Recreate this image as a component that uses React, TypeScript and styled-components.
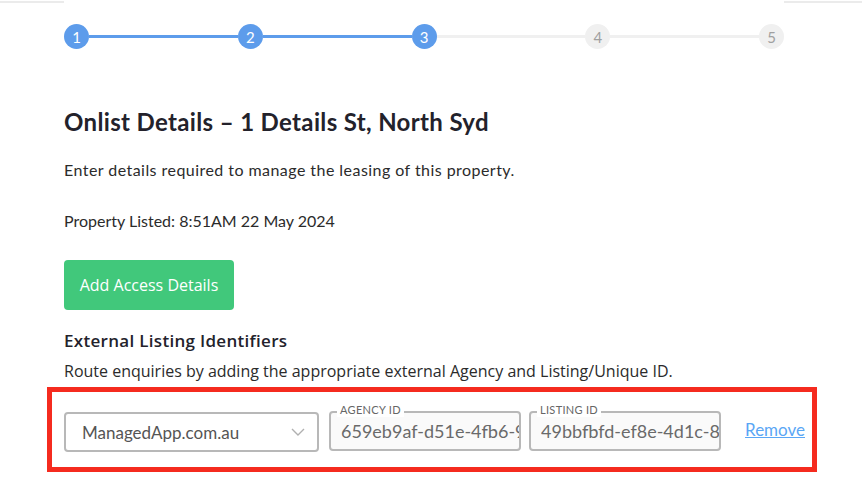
import React from "react";
import styled, { createGlobalStyle } from "styled-components";

const Global = createGlobalStyle`
  html, body { margin: 0; padding: 0; background: #fff; overflow: hidden; }
  body { width: 862px; height: 483px; }
`;

const TopRule = styled.div`
  display: grid;
  grid-template-columns: 64px 720px 1fr;
  height: 3px;
  align-items: end;
`;

const RuleSeg = styled.div<{ $show?: boolean }>`
  height: 2px;
  background: ${(p) => (p.$show ? "#ebebeb" : "transparent")};
`;

const Main = styled.main`
  width: 720px;
  margin-left: 64px;
  display: flex;
  flex-direction: column;
`;

const Stepper = styled.div`
  display: flex;
  align-items: center;
  margin-top: 21px;
`;

const StepDot = styled.div<{ $done: boolean }>`
  width: 25px;
  height: 25px;
  border-radius: 50%;
  flex: none;
  display: flex;
  align-items: center;
  justify-content: center;
  background: ${(p) => (p.$done ? "#5d9ceb" : "#f0f0f0")};
  color: ${(p) => (p.$done ? "#ffffff" : "#a0a0a0")};
  font-family: "Lato", "DejaVu Sans", sans-serif;
  font-size: 15px;
  font-weight: 400;
`;

const StepLine = styled.div<{ $done: boolean }>`
  flex: 1;
  height: 3px;
  background: ${(p) => (p.$done ? "#5d9ceb" : "#f0f0f0")};
`;

const Title = styled.h1`
  margin: 58px 0 0;
  font-family: "Lato", sans-serif;
  font-weight: 700;
  font-size: 24px;
  line-height: 30px;
  color: #23222b;
  letter-spacing: 0.35px;
`;

const Para = styled.p<{ $mt: number; $ls: number }>`
  margin: ${(p) => p.$mt}px 0 0;
  font-family: "Lato", sans-serif;
  font-size: 16px;
  line-height: 22px;
  color: #2b2b2b;
  letter-spacing: ${(p) => p.$ls}px;
`;

const GreenButton = styled.button`
  margin-top: 28px;
  align-self: flex-start;
  width: 170px;
  height: 50px;
  border: none;
  border-radius: 4px;
  background: #41c87b;
  color: #ffffff;
  font-family: "Open Sans", sans-serif;
  font-size: 16px;
  font-weight: 500;
  padding: 0;
`;

const SectionTitle = styled.h2`
  margin: 19px 0 0;
  font-family: "Open Sans", sans-serif;
  font-weight: 600;
  font-size: 17px;
  line-height: 24px;
  color: #23222b;
  letter-spacing: 0.3px;
`;

const SectionText = styled.p`
  margin: 7px 0 0;
  font-family: "Open Sans", sans-serif;
  font-size: 16px;
  line-height: 22px;
  color: #2b2b2b;
`;

const Highlight = styled.div`
  margin: 5px 0 0 -17px;
  width: 770px;
  box-sizing: border-box;
  border: 5px solid #f52b1f;
  padding: 18px 7px 15px 12px;
  display: flex;
  align-items: center;
`;

const SelectBox = styled.div`
  width: 256px;
  height: 40px;
  box-sizing: border-box;
  border: 2px solid #b8b8b8;
  border-radius: 4px;
  display: flex;
  align-items: center;
  justify-content: space-between;
  padding: 0 12px 0 16px;
  font-family: "Lato", sans-serif;
  font-size: 17px;
  color: #555;
  margin-top: 2px;
`;

const FieldWrap = styled.div<{ $gap: number }>`
  position: relative;
  margin-left: ${(p) => p.$gap}px;
`;

const FieldInput = styled.input`
  display: block;
  width: 192px;
  height: 40px;
  box-sizing: border-box;
  border: 2px solid #b8b8b8;
  border-radius: 4px;
  background: #fafafa;
  margin: 0;
  padding: 0 0 0 10px;
  font-family: "Lato", sans-serif;
  font-size: 18px;
  color: #6a6a6a;
  outline: none;
`;

const FieldLabel = styled.span`
  position: absolute;
  top: -8px;
  left: 8px;
  padding: 0 3px;
  background: #fff;
  font-family: "Lato", sans-serif;
  font-size: 11px;
  line-height: 14px;
  color: #666;
  letter-spacing: 0.3px;
`;

const RemoveLink = styled.a`
  margin-left: 24px;
  margin-top: -4px;
  font-family: "Lato", sans-serif;
  font-size: 17px;
  color: #5aa6f5;
  text-decoration: underline;
  cursor: pointer;
`;

const Chevron = () => (
  <svg width="14" height="8" viewBox="0 0 14 8" fill="none">
    <path d="M1 1l6 6 6-6" stroke="#b0b0b0" strokeWidth="1.4" />
  </svg>
);

const steps = [1, 2, 3, 4, 5];
const current = 3;

export default function App() {
  return (
    <>
      <Global />
      <TopRule>
        <RuleSeg $show />
        <RuleSeg />
        <RuleSeg $show />
      </TopRule>
      <Main>
        <Stepper>
          {steps.map((s, i) => (
            <React.Fragment key={s}>
              {i > 0 && <StepLine $done={s <= current} />}
              <StepDot $done={s <= current}>{s}</StepDot>
            </React.Fragment>
          ))}
        </Stepper>
        <Title>Onlist Details – 1 Details St, North Syd</Title>
        <Para $mt={22} $ls={0.45}>Enter details required to manage the leasing of this property.</Para>
        <Para $mt={29} $ls={0}>Property Listed: 8:51AM 22 May 2024</Para>
        <GreenButton>Add Access Details</GreenButton>
        <SectionTitle>External Listing Identifiers</SectionTitle>
        <SectionText>Route enquiries by adding the appropriate external Agency and Listing/Unique ID.</SectionText>
        <Highlight>
          <SelectBox>
            <span>ManagedApp.com.au</span>
            <Chevron />
          </SelectBox>
          <FieldWrap $gap={10}>
            <FieldInput readOnly value="659eb9af-d51e-4fb6-9a2c-1e" />
            <FieldLabel>AGENCY ID</FieldLabel>
          </FieldWrap>
          <FieldWrap $gap={8}>
            <FieldInput readOnly value="49bbfbfd-ef8e-4d1c-8b3a-2f" />
            <FieldLabel>LISTING ID</FieldLabel>
          </FieldWrap>
          <RemoveLink>Remove</RemoveLink>
        </Highlight>
      </Main>
    </>
  );
}
